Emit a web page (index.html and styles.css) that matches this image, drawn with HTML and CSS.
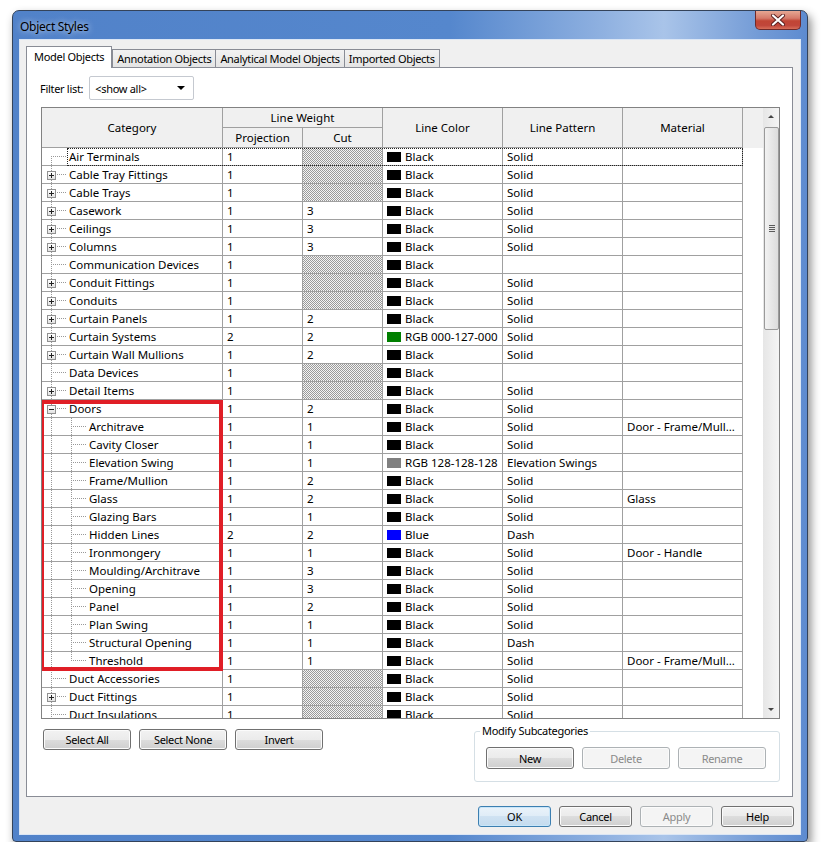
FILE: index.html
```html
<!DOCTYPE html>
<html lang="en">
<head>
    <meta charset="UTF-8">
    <meta name="viewport" content="width=device-width, initial-scale=1.0">
    <title>Object Styles</title>
    <link rel="stylesheet" href="styles.css">
</head>
<body>
    <div class="window">
        <div class="titlebar">
            <span class="title">Object Styles</span>
            <button class="close" title="Close">
                <svg width="16" height="12" viewBox="0 0 16 12">
                    <path d="M3 1.5 L13 10.5 M13 1.5 L3 10.5" stroke="#5a1f1f" stroke-width="4" stroke-linecap="round"/>
                    <path d="M3 1.5 L13 10.5 M13 1.5 L3 10.5" stroke="#fff" stroke-width="2.2" stroke-linecap="round"/>
                </svg>
            </button>
        </div>

        <div class="client">
            <div class="tabs">
                <div class="tab active">Model Objects</div>
                <div class="tab">Annotation Objects</div>
                <div class="tab">Analytical Model Objects</div>
                <div class="tab">Imported Objects</div>
            </div>

            <div class="panel">
                <div class="filter">
                    <label>Filter list:</label>
                    <div class="select">
                        <span>&lt;show all&gt;</span>
                        <span class="caret"></span>
                    </div>
                </div>

                <div class="grid">
                    <div class="grid-main">
                        <div class="head">
                            <div class="hc cat-h">Category</div>
                            <div class="hc weight-h">Line Weight</div>
                            <div class="hc color-h">Line Color</div>
                            <div class="hc pattern-h">Line Pattern</div>
                            <div class="hc material-h">Material</div>
                            <div class="hc filler-h"></div>
                            <div class="hc">Projection</div>
                            <div class="hc">Cut</div>
                        </div>

                        <div class="rows">
                            <div class="row focus">
                                <div class="c cat first">Air Terminals</div>
                                <div class="c">1</div><div class="c hatch"></div>
                                <div class="c"><span class="sw"></span>Black</div><div class="c">Solid</div><div class="c"></div>
                            </div>
                            <div class="row">
                                <div class="c cat"><span class="exp plus"></span>Cable Tray Fittings</div>
                                <div class="c">1</div><div class="c hatch"></div>
                                <div class="c"><span class="sw"></span>Black</div><div class="c">Solid</div><div class="c"></div>
                            </div>
                            <div class="row">
                                <div class="c cat"><span class="exp plus"></span>Cable Trays</div>
                                <div class="c">1</div><div class="c hatch"></div>
                                <div class="c"><span class="sw"></span>Black</div><div class="c">Solid</div><div class="c"></div>
                            </div>
                            <div class="row">
                                <div class="c cat"><span class="exp plus"></span>Casework</div>
                                <div class="c">1</div><div class="c">3</div>
                                <div class="c"><span class="sw"></span>Black</div><div class="c">Solid</div><div class="c"></div>
                            </div>
                            <div class="row">
                                <div class="c cat"><span class="exp plus"></span>Ceilings</div>
                                <div class="c">1</div><div class="c">3</div>
                                <div class="c"><span class="sw"></span>Black</div><div class="c">Solid</div><div class="c"></div>
                            </div>
                            <div class="row">
                                <div class="c cat"><span class="exp plus"></span>Columns</div>
                                <div class="c">1</div><div class="c">3</div>
                                <div class="c"><span class="sw"></span>Black</div><div class="c">Solid</div><div class="c"></div>
                            </div>
                            <div class="row">
                                <div class="c cat">Communication Devices</div>
                                <div class="c">1</div><div class="c hatch"></div>
                                <div class="c"><span class="sw"></span>Black</div><div class="c"></div><div class="c"></div>
                            </div>
                            <div class="row">
                                <div class="c cat"><span class="exp plus"></span>Conduit Fittings</div>
                                <div class="c">1</div><div class="c hatch"></div>
                                <div class="c"><span class="sw"></span>Black</div><div class="c">Solid</div><div class="c"></div>
                            </div>
                            <div class="row">
                                <div class="c cat"><span class="exp plus"></span>Conduits</div>
                                <div class="c">1</div><div class="c hatch"></div>
                                <div class="c"><span class="sw"></span>Black</div><div class="c">Solid</div><div class="c"></div>
                            </div>
                            <div class="row">
                                <div class="c cat"><span class="exp plus"></span>Curtain Panels</div>
                                <div class="c">1</div><div class="c">2</div>
                                <div class="c"><span class="sw"></span>Black</div><div class="c">Solid</div><div class="c"></div>
                            </div>
                            <div class="row">
                                <div class="c cat"><span class="exp plus"></span>Curtain Systems</div>
                                <div class="c">2</div><div class="c">2</div>
                                <div class="c"><span class="sw green"></span>RGB 000-127-000</div><div class="c">Solid</div><div class="c"></div>
                            </div>
                            <div class="row">
                                <div class="c cat"><span class="exp plus"></span>Curtain Wall Mullions</div>
                                <div class="c">1</div><div class="c">2</div>
                                <div class="c"><span class="sw"></span>Black</div><div class="c">Solid</div><div class="c"></div>
                            </div>
                            <div class="row">
                                <div class="c cat">Data Devices</div>
                                <div class="c">1</div><div class="c hatch"></div>
                                <div class="c"><span class="sw"></span>Black</div><div class="c"></div><div class="c"></div>
                            </div>
                            <div class="row">
                                <div class="c cat"><span class="exp plus"></span>Detail Items</div>
                                <div class="c">1</div><div class="c hatch"></div>
                                <div class="c"><span class="sw"></span>Black</div><div class="c">Solid</div><div class="c"></div>
                            </div>
                            <div class="row">
                                <div class="c cat"><span class="exp"></span>Doors</div>
                                <div class="c">1</div><div class="c">2</div>
                                <div class="c"><span class="sw"></span>Black</div><div class="c">Solid</div><div class="c"></div>
                            </div>
                            <div class="row">
                                <div class="c cat child">Architrave</div>
                                <div class="c">1</div><div class="c">1</div>
                                <div class="c"><span class="sw"></span>Black</div><div class="c">Solid</div><div class="c">Door - Frame/Mull...</div>
                            </div>
                            <div class="row">
                                <div class="c cat child">Cavity Closer</div>
                                <div class="c">1</div><div class="c">1</div>
                                <div class="c"><span class="sw"></span>Black</div><div class="c">Solid</div><div class="c"></div>
                            </div>
                            <div class="row">
                                <div class="c cat child">Elevation Swing</div>
                                <div class="c">1</div><div class="c">1</div>
                                <div class="c"><span class="sw grey"></span>RGB 128-128-128</div><div class="c">Elevation Swings</div><div class="c"></div>
                            </div>
                            <div class="row">
                                <div class="c cat child">Frame/Mullion</div>
                                <div class="c">1</div><div class="c">2</div>
                                <div class="c"><span class="sw"></span>Black</div><div class="c">Solid</div><div class="c"></div>
                            </div>
                            <div class="row">
                                <div class="c cat child">Glass</div>
                                <div class="c">1</div><div class="c">2</div>
                                <div class="c"><span class="sw"></span>Black</div><div class="c">Solid</div><div class="c">Glass</div>
                            </div>
                            <div class="row">
                                <div class="c cat child">Glazing Bars</div>
                                <div class="c">1</div><div class="c">1</div>
                                <div class="c"><span class="sw"></span>Black</div><div class="c">Solid</div><div class="c"></div>
                            </div>
                            <div class="row">
                                <div class="c cat child">Hidden Lines</div>
                                <div class="c">2</div><div class="c">2</div>
                                <div class="c"><span class="sw blue"></span>Blue</div><div class="c">Dash</div><div class="c"></div>
                            </div>
                            <div class="row">
                                <div class="c cat child">Ironmongery</div>
                                <div class="c">1</div><div class="c">1</div>
                                <div class="c"><span class="sw"></span>Black</div><div class="c">Solid</div><div class="c">Door - Handle</div>
                            </div>
                            <div class="row">
                                <div class="c cat child">Moulding/Architrave</div>
                                <div class="c">1</div><div class="c">3</div>
                                <div class="c"><span class="sw"></span>Black</div><div class="c">Solid</div><div class="c"></div>
                            </div>
                            <div class="row">
                                <div class="c cat child">Opening</div>
                                <div class="c">1</div><div class="c">3</div>
                                <div class="c"><span class="sw"></span>Black</div><div class="c">Solid</div><div class="c"></div>
                            </div>
                            <div class="row">
                                <div class="c cat child">Panel</div>
                                <div class="c">1</div><div class="c">2</div>
                                <div class="c"><span class="sw"></span>Black</div><div class="c">Solid</div><div class="c"></div>
                            </div>
                            <div class="row">
                                <div class="c cat child">Plan Swing</div>
                                <div class="c">1</div><div class="c">1</div>
                                <div class="c"><span class="sw"></span>Black</div><div class="c">Solid</div><div class="c"></div>
                            </div>
                            <div class="row">
                                <div class="c cat child">Structural Opening</div>
                                <div class="c">1</div><div class="c">1</div>
                                <div class="c"><span class="sw"></span>Black</div><div class="c">Dash</div><div class="c"></div>
                            </div>
                            <div class="row">
                                <div class="c cat child last">Threshold</div>
                                <div class="c">1</div><div class="c">1</div>
                                <div class="c"><span class="sw"></span>Black</div><div class="c">Solid</div><div class="c">Door - Frame/Mull...</div>
                            </div>
                            <div class="row">
                                <div class="c cat">Duct Accessories</div>
                                <div class="c">1</div><div class="c hatch"></div>
                                <div class="c"><span class="sw"></span>Black</div><div class="c">Solid</div><div class="c"></div>
                            </div>
                            <div class="row">
                                <div class="c cat"><span class="exp plus"></span>Duct Fittings</div>
                                <div class="c">1</div><div class="c hatch"></div>
                                <div class="c"><span class="sw"></span>Black</div><div class="c">Solid</div><div class="c"></div>
                            </div>
                            <div class="row">
                                <div class="c cat">Duct Insulations</div>
                                <div class="c">1</div><div class="c hatch"></div>
                                <div class="c"><span class="sw"></span>Black</div><div class="c">Solid</div><div class="c"></div>
                            </div>
                        </div>

                        <!-- highlight around the Doors subcategories -->
                        <div class="callout"></div>
                    </div>

                    <div class="vscroll">
                        <div class="arrow up"></div>
                        <div class="thumb"><span class="grip"></span></div>
                        <div class="track"></div>
                        <div class="arrow down"></div>
                    </div>
                </div>

                <div class="actions">
                    <div class="select-btns">
                        <button class="btn">Select All</button>
                        <button class="btn">Select None</button>
                        <button class="btn">Invert</button>
                    </div>
                    <fieldset class="group">
                        <legend>Modify Subcategories</legend>
                        <button class="btn wide">New</button>
                        <button class="btn wide" disabled>Delete</button>
                        <button class="btn wide" disabled>Rename</button>
                    </fieldset>
                </div>
            </div>

            <div class="footer">
                <button class="btn dlg default">OK</button>
                <button class="btn dlg">Cancel</button>
                <button class="btn dlg" disabled>Apply</button>
                <button class="btn dlg">Help</button>
            </div>
        </div>
    </div>
</body>
</html>
```

FILE: styles.css
```css
body {
    margin: 0;
    background-color: #fff;
    font-family: "Noto Sans", "Open Sans", sans-serif;
    font-size: 11px;
    letter-spacing: -0.3px;
    color: #000;
}
.window {
    margin: 10px 0 0 12px;
    width: 796px;
    height: 832px;
    box-sizing: border-box;
    border: 1px solid #34435a;
    border-radius: 7px 7px 4px 4px;
    padding: 0 6px 6px 6px;
    background: linear-gradient(to right, #5182c9 0%, #5587cd 55%, #8eb0e0 74%, #a9c4e9 82%, #739bd6 94%, #5d8bd0 100%);
    box-shadow: 3px 5px 10px rgba(0, 0, 0, 0.45);
    display: flex;
    flex-direction: column;
}
.titlebar {
    height: 28px;
    display: flex;
    justify-content: space-between;
    align-items: flex-start;
}
.title {
    margin: 7px 0 0 1px;
    font-size: 12px;
    text-shadow: 0 0 6px rgba(255, 255, 255, 0.9);
}
.close {
    width: 46px;
    height: 19px;
    padding: 0;
    border: 1px solid #6e2a2a;
    border-top: none;
    border-radius: 0 0 5px 5px;
    background: linear-gradient(#e6a793 0%, #d57a6a 40%, #c14535 55%, #c0463a 80%, #d76d59 100%);
    display: flex;
    justify-content: center;
    align-items: center;
}
.client {
    flex: 1;
    background-color: #f0f0f0;
    border: 1px solid #dbe6f5;
    padding: 7px 7px 0 6px;
    display: flex;
    flex-direction: column;
}
.tabs {
    height: 20px;
    display: flex;
    align-items: flex-end;
}
.tab {
    height: 17px;
    line-height: 17px;
    padding: 0 4px;
    border: 1px solid #898c95;
    border-bottom: none;
    margin-left: -1px;
    background: linear-gradient(#f2f2f2, #e4e4e4);
}
.tab.active {
    height: 21px;
    line-height: 19px;
    padding: 0 7px;
    margin: 0 1px -1px 0;
    background: #fff;
    position: relative;
    z-index: 1;
}
.panel {
    height: 730px;
    box-sizing: border-box;
    border: 1px solid #898c95;
    background: #fff;
    padding: 8px 12px 0 13px;
}
.filter {
    display: flex;
    align-items: center;
    gap: 6px;
    height: 24px;
}
.select {
    width: 105px;
    height: 24px;
    box-sizing: border-box;
    border: 1px solid #c5c9d0;
    border-radius: 2px;
    display: flex;
    align-items: center;
    justify-content: space-between;
    padding: 0 8px 0 5px;
}
.caret {
    border-left: 4px solid transparent;
    border-right: 4px solid transparent;
    border-top: 4px solid #000;
}
.grid {
    margin: 7px 0 0 1px;
    width: 739px;
    height: 612px;
    box-sizing: border-box;
    border: 1px solid #828282;
    display: flex;
    font-size: 11.5px;
    letter-spacing: 0;
}
.grid-main {
    width: 721px;
    overflow: hidden;
    position: relative;
}
.head {
    display: grid;
    grid-template-columns: 181px 80px 80px 120px 120px 120px 20px;
    grid-template-rows: 20px 20px;
    background: #f0f0f0;
}
.hc {
    border-right: 1px solid #a0a0a0;
    border-bottom: 1px solid #a0a0a0;
    display: flex;
    align-items: center;
    justify-content: center;
}
.cat-h { grid-row: 1 / 3; grid-column: 1; }
.weight-h { grid-column: 2 / 4; }
.color-h { grid-row: 1 / 3; grid-column: 4; }
.pattern-h { grid-row: 1 / 3; grid-column: 5; }
.material-h { grid-row: 1 / 3; grid-column: 6; }
.filler-h { grid-row: 1 / 3; grid-column: 7; border: none; }
.row {
    display: grid;
    grid-template-columns: 181px 80px 80px 120px 120px 120px;
    width: 701px;
    height: 18px;
}
.row.focus {
    position: relative;
}
.row.focus::after {
    content: "";
    position: absolute;
    left: 25px;
    right: 0;
    top: 0;
    bottom: 0;
    border: 1px dotted #222;
}
.c {
    border-right: 1px solid #a0a0a0;
    border-bottom: 1px solid #a0a0a0;
    padding-left: 4px;
    line-height: 17px;
    white-space: nowrap;
    overflow: hidden;
}
.cat {
    padding-left: 27px;
    background:
        repeating-linear-gradient(to bottom, #999 0 1px, transparent 1px 2px) 9px 0 / 1px 100% no-repeat,
        repeating-linear-gradient(to right, #999 0 1px, transparent 1px 2px) 9px 8px / 16px 1px no-repeat;
}
.cat.first {
    background:
        repeating-linear-gradient(to bottom, #999 0 1px, transparent 1px 2px) 9px 8px / 1px 100% no-repeat,
        repeating-linear-gradient(to right, #999 0 1px, transparent 1px 2px) 9px 8px / 16px 1px no-repeat;
}
.cat.child {
    padding-left: 47px;
    background:
        repeating-linear-gradient(to bottom, #999 0 1px, transparent 1px 2px) 9px 0 / 1px 100% no-repeat,
        repeating-linear-gradient(to bottom, #999 0 1px, transparent 1px 2px) 29px 0 / 1px 100% no-repeat,
        repeating-linear-gradient(to right, #999 0 1px, transparent 1px 2px) 29px 8px / 16px 1px no-repeat;
}
.cat.child.last {
    background:
        repeating-linear-gradient(to bottom, #999 0 1px, transparent 1px 2px) 9px 0 / 1px 100% no-repeat,
        repeating-linear-gradient(to bottom, #999 0 1px, transparent 1px 2px) 29px 0 / 1px 9px no-repeat,
        repeating-linear-gradient(to right, #999 0 1px, transparent 1px 2px) 29px 8px / 16px 1px no-repeat;
}
.exp {
    display: inline-block;
    position: relative;
    width: 9px;
    height: 9px;
    box-sizing: border-box;
    border: 1px solid #919191;
    background: linear-gradient(#fff, #e2e2e2);
    vertical-align: -1px;
    margin: 0 13px 0 -22px;
}
.exp::before {
    content: "";
    position: absolute;
    left: 1px;
    top: 3px;
    width: 5px;
    height: 1px;
    background: #222;
}
.exp.plus::after {
    content: "";
    position: absolute;
    left: 3px;
    top: 1px;
    width: 1px;
    height: 5px;
    background: #222;
}
.hatch {
    background: repeating-conic-gradient(#9a9a9a 0 25%, #f4f4f4 0 50%) 0 0 / 2px 2px;
}
.sw {
    display: inline-block;
    width: 14px;
    height: 10px;
    background: #000;
    margin-right: 4px;
    vertical-align: -1px;
}
.sw.green { background: #007f00; }
.sw.grey { background: #808080; }
.sw.blue { background: #0000ff; }
.callout {
    position: absolute;
    left: -2px;
    top: 292px;
    width: 183px;
    height: 271px;
    box-sizing: border-box;
    border: 4px solid #e01e26;
}
.vscroll {
    width: 16px;
    display: flex;
    flex-direction: column;
    background: linear-gradient(to right, #e6e6e6, #f4f4f4);
}
.arrow {
    height: 18px;
    position: relative;
}
.arrow::after {
    content: "";
    position: absolute;
    left: 5px;
    border-left: 3px solid transparent;
    border-right: 3px solid transparent;
}
.arrow.up::after {
    top: 7px;
    border-bottom: 3px solid #444;
}
.arrow.down::after {
    top: 8px;
    border-top: 3px solid #444;
}
.thumb {
    height: 203px;
    margin: 1px 0 0 1px;
    box-sizing: border-box;
    border: 1px solid #9a9a9a;
    border-radius: 2px;
    background: linear-gradient(to right, #f2f2f2, #dcdcdc);
    display: flex;
    align-items: center;
    justify-content: center;
}
.grip {
    width: 6px;
    height: 7px;
    background: repeating-linear-gradient(to bottom, #5a5a5a 0 1px, transparent 1px 2px);
}
.track {
    flex: 1;
}
.actions {
    margin-top: 5px;
    display: flex;
    justify-content: space-between;
    width: 740px;
}
.select-btns {
    display: flex;
    gap: 8px;
    margin: 5px 0 0 3px;
}
.btn {
    width: 88px;
    height: 21px;
    padding: 0;
    font-family: inherit;
    font-size: 11px;
    letter-spacing: inherit;
    color: #000;
    border: 1px solid #707070;
    border-radius: 3px;
    background: linear-gradient(#f2f2f2 0%, #ebebeb 50%, #dddddd 50%, #cfcfcf 100%);
    box-shadow: inset 0 0 0 1px #fbfbfb;
}
.btn:disabled {
    color: #8a8a8a;
    border-color: #adb2b5;
    background: #f4f4f4;
}
.group {
    margin: 0;
    width: 306px;
    box-sizing: border-box;
    border: 1px solid #d5dfe5;
    border-radius: 3px;
    padding: 9px 0 12px 11px;
    display: flex;
    gap: 8px;
}
.group legend {
    padding: 0 2px;
    margin-left: -6px;
    line-height: 14px;
}
.btn.wide {
    height: 22px;
}
.footer {
    display: flex;
    justify-content: flex-end;
    gap: 8px;
    margin: 9px -1px 0 0;
}
.btn.dlg {
    width: 73px;
}
.btn.default {
    border-color: #3c7fb1;
    background: linear-gradient(#eaf3fa 0%, #dfecf7 50%, #cfe2f2 50%, #c4dbee 100%);
    box-shadow: inset 0 0 0 1px #c9e6f9;
}
```
